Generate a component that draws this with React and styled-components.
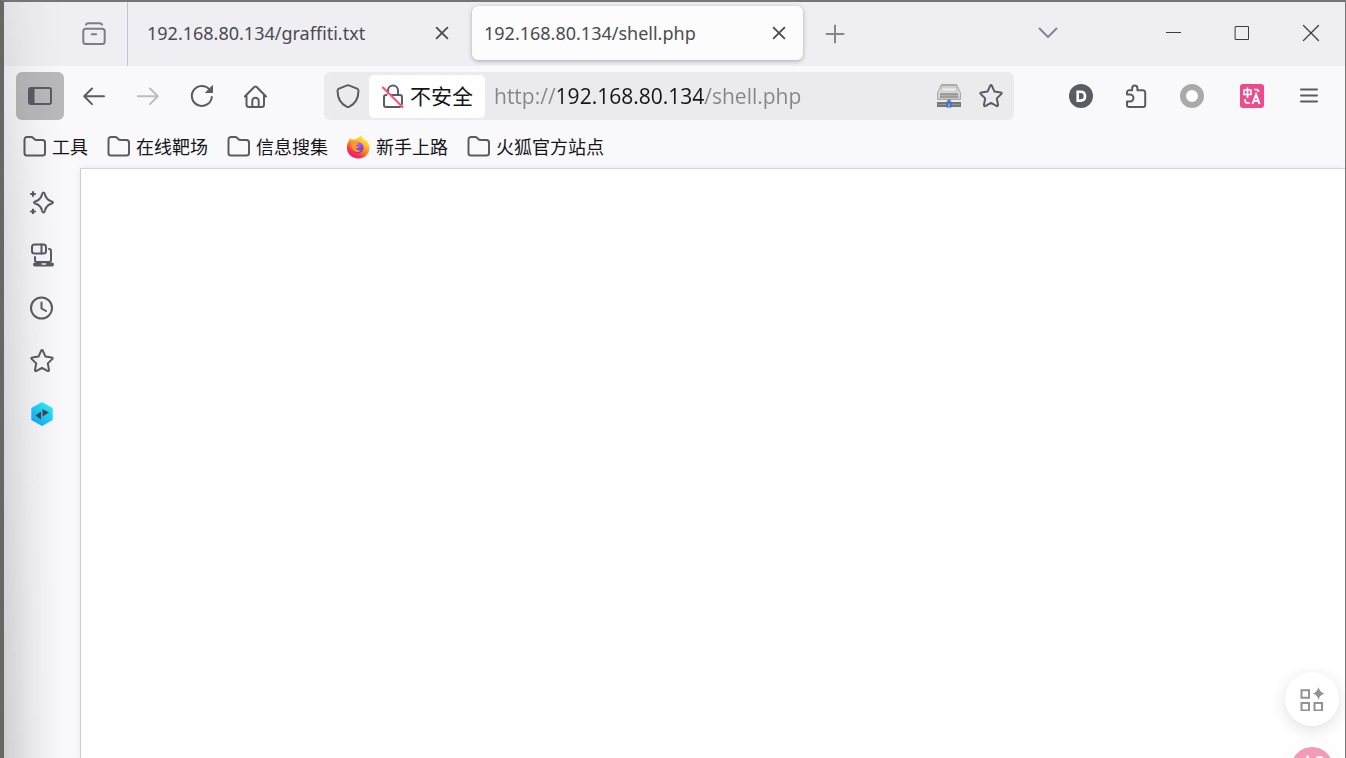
import React, { useState } from 'react';
import styled, { createGlobalStyle } from 'styled-components';


const GlobalStyle = createGlobalStyle`
  * { box-sizing: border-box; }

  body {
    margin: 0;
    font-family: 'Open Sans', 'Noto Sans CJK SC', sans-serif;
    color: #15141a;
  }

  button, input { font-family: inherit; }
`;


const BrowserWindow = styled.div`
  position: relative;
  display: flex;
  flex-direction: column;
  min-height: 100vh;
  overflow: hidden;
  border-style: solid;
  border-width: 2px 1px 0 4px;
  border-color: #757573 #777777 #757573 #686763;
  background: #f9f9fb;

  /* shade that falls on the left edge of the window */
  &::before {
    content: '';
    position: absolute;
    z-index: 2;
    top: 0;
    bottom: 0;
    left: 0;
    width: 60px;
    pointer-events: none;
    background: linear-gradient(to right, rgba(0,0,0,0.17), rgba(0,0,0,0.07) 45%, rgba(0,0,0,0.02) 80%, transparent);
    mask-image: linear-gradient(rgba(0,0,0,0.3), rgba(0,0,0,0.6) 25%, #000);
  }
`;

const TabStrip = styled.header`
  display: flex;
  align-items: center;
  height: 64px;
  padding-bottom: 2px;
  background: #efeef3;
`;

const IconButton = styled.button`
  display: flex;
  align-items: center;
  justify-content: center;
  flex: none;
  width: ${(props) => props.$width || 48}px;
  height: 48px;
  padding: 0;
  border: none;
  border-radius: 6px;
  background: ${(props) => (props.$active ? '#b9b9bb' : 'transparent')};
  color: ${(props) => props.$color || '#5b5b66'};
  cursor: pointer;
`;

const ViewArea = styled.div`
  display: flex;
  justify-content: flex-end;
  align-items: center;
  align-self: flex-start;
  flex: none;
  width: 124px;
  height: 64px;
  padding-right: 9px;
  border-right: 1px solid #c4c4ca;
`;

const TabList = styled.div`
  display: flex;
  gap: 6px;
  padding: 0 8px 0 7px;
`;

const Tab = styled.div`
  display: flex;
  align-items: center;
  width: 331px;
  height: 54px;
  padding: 0 12px;
  border-radius: 6px;
  background: ${(props) => (props.$active ? '#fcfcfc' : 'transparent')};
  box-shadow: ${(props) => (props.$active ? '0 1px 4px rgba(0,0,0,0.3)' : 'none')};
`;

const TabTitle = styled.button`
  flex: 1;
  padding: 0;
  border: none;
  background: none;
  color: #4b4b50;
  font-family: 'Noto Sans', sans-serif;
  font-size: 18px;
  line-height: 28px;
  text-align: left;
  white-space: nowrap;
  cursor: pointer;
`;

const WindowControls = styled.div`
  display: flex;
  margin-left: auto;
`;

const ListTabs = styled.div`
  padding-right: 66px;
`;

const Toolbar = styled.nav`
  display: flex;
  align-items: center;
  gap: 6px;
  height: 60px;
  padding: 0 12px;
`;

const UrlBar = styled.form`
  display: flex;
  align-items: center;
  flex: 1;
  min-width: 0;
  height: 48px;
  margin: 0 37px 0 38px;
  padding: 0 2px 0 3px;
  border-radius: 6px;
  background: #ebebed;
`;

const Identity = styled.button`
  display: flex;
  align-items: center;
  flex: none;
  gap: 5px;
  height: 43px;
  padding: 0 12px;
  border: none;
  border-radius: 5px;
  background: #ffffff;
  color: #5b5b66;
`;

const IdentityLabel = styled.span`
  padding-bottom: 2px;
  color: #15141a;
  font-family: 'Noto Sans CJK SC', sans-serif;
  font-size: 21px;
  line-height: 28px;
  white-space: nowrap;
`;

/* the host part of the address is darker than the rest */
const UrlInput = styled.input`
  flex: 1;
  min-width: 0;
  height: 40px;
  margin-left: 9px;
  padding: 0;
  border: none;
  outline: none;
  background: linear-gradient(to right, #86868a 64px, #15141a 64px, #15141a 211px, #86868a 211px);
  background-clip: text;
  -webkit-background-clip: text;
  color: transparent;
  caret-color: #15141a;
  font-size: 21px;
`;

const BookmarksBar = styled.nav`
  display: flex;
  align-items: center;
  gap: 19px;
  height: 42px;
  padding: 0 19px;
`;

const Bookmark = styled.a`
  display: flex;
  align-items: center;
  gap: 5px;
  text-decoration: none;
`;

const BookmarkLabel = styled.span`
  padding-bottom: 2px;
  color: #15141a;
  font-family: 'Noto Sans CJK SC', sans-serif;
  font-size: 18px;
  line-height: 26px;
  white-space: nowrap;
`;

const Body = styled.div`
  display: flex;
  flex: 1;
`;

const Sidebar = styled.aside`
  display: flex;
  flex-direction: column;
  align-items: center;
  flex: none;
  gap: 5px;
  width: 76px;
  padding-top: 10px;
`;

const Page = styled.main`
  flex: 1;
  border-top: 1px solid #d4d4d8;
  border-left: 1px solid #cfcfd2;
  background: #ffffff;
  box-shadow: 0 0 6px rgba(0,0,0,0.08);
`;

const FloatingTools = styled.div`
  position: absolute;
  right: 6px;
  bottom: -37px;
  display: flex;
  flex-direction: column;
  gap: 15px;
`;

const FloatingButton = styled.button`
  display: flex;
  align-items: center;
  justify-content: center;
  width: 54px;
  height: 54px;
  padding: 0;
  border: none;
  border-radius: 50%;
  background: #ffffff;
  color: #929292;
  box-shadow: ${(props) => (props.$flat ? '0 0 6px rgba(0,0,0,0.03)' : '0 4px 16px rgba(0,0,0,0.12)')};
`;


const Icon = ({ size = 24, children }) => (
  <svg width={size} height={size} viewBox="0 0 24 24" fill="none" stroke="currentColor" strokeWidth="2" strokeLinecap="round" strokeLinejoin="round" aria-hidden="true">
    {children}
  </svg>
)

const StarIcon = () => (
  <Icon>
    <path d="M11.1 1.8Q12 .3 12.9 1.8L15.5 7.6L21.7 8.4Q23.4 8.8 22.2 10.1L17.8 14.4L19 20.8Q19.1 22.7 17.4 21.9L12 18.9L6.6 21.9Q4.9 22.7 5 20.8L6.2 14.4L1.8 10.1Q.6 8.8 2.3 8.4L8.5 7.6Z" />
  </Icon>
)

const FolderIcon = () => (
  <Icon>
    <path stroke="#5b5b66" d="M1.5 4.5a2.5 2.5 0 0 1 2.5-2.5h4.3a2.5 2.5 0 0 1 1.7.7l1.5 1.5a2.5 2.5 0 0 0 1.7.7H19.5a2.5 2.5 0 0 1 2.5 2.5v10.6a2.5 2.5 0 0 1-2.5 2.5H4a2.5 2.5 0 0 1-2.5-2.5z" />
  </Icon>
)

const CloseIcon = () => (
  <Icon><path strokeWidth="1.8" d="M6.6 6.6l10.8 10.8M17.4 6.6L6.6 17.4" /></Icon>
)

const FirefoxIcon = () => (
  <svg width="24" height="24" viewBox="0.8 0 24 24" aria-hidden="true">
    <defs>
      <linearGradient id="fox" x1="0.8" y1="0.05" x2="0.25" y2="0.95">
        <stop offset="0" stopColor="#fff44f" />
        <stop offset="0.3" stopColor="#ffbd2e" />
        <stop offset="0.55" stopColor="#ff8020" />
        <stop offset="0.78" stopColor="#ff3647" />
        <stop offset="1" stopColor="#e31587" />
      </linearGradient>
      <radialGradient id="globe" cx="0.6" cy="0.2" r="0.9">
        <stop offset="0" stopColor="#a95cff" />
        <stop offset="0.55" stopColor="#7542e5" />
        <stop offset="1" stopColor="#4a2bb5" />
      </radialGradient>
    </defs>
    <path fill="url(#fox)" d="M15.6.3c.2 2.3 1.7 3.4 3.2 4.9.2-.2.3-.5.2-1 2.6 2 4.3 5.2 4.3 8.6 0 6-4.8 10.7-11 10.7S.7 18.8.7 12.8C.7 9.6 1.6 7 3.3 5.1c0-.8 0-1.4.2-2 .7.5 1.3 1.1 1.8 1.7 1-.3 2-.3 2.900-.1 1.300-1.100 2.800-1.500 3.300-1.500.9-1 2.300-2.200 4.100-2.900z" />
    <circle cx="12" cy="12.500" r="5.300" fill="url(#globe)" />
    <path fill="#ff9a2b" d="M5 7.500c1.800-1 3.600-.7 4.800.3 1 .2 2.400 0 2.500.6 0 1-2.100 1.300-2.500 2.400.9 1.100 2.400.6 3.500.8-1 1.500-2.700 1.500-3.800 1.400 1 2.100 3.600 3 6.100 1.700-1.500 2.500-5.700 3-8 .7C5.300 13.300 4.700 10 5 7.500z" />
  </svg>
)

const ServerIcon = () => (
  <svg width="24" height="24" viewBox="0 0 24 24" aria-hidden="true">
    <defs>
      <linearGradient id="drive" x1="0" y1="0" x2="0" y2="1">
        <stop offset="0" stopColor="#a9a9a9" />
        <stop offset="0.45" stopColor="#dddddd" />
        <stop offset="1" stopColor="#c4c4c4" />
      </linearGradient>
    </defs>
    <path d="M4.5.5h15L23.5 9v6.500H.5V9z" fill="url(#drive)" stroke="#a8a8a8" />
    <path d="M5 2h14l2.500 6h-19z" fill="#cfcfcf" />
    <path d="M5.500 5.500h13" stroke="#f0f0f0" strokeWidth="2" />
    <path d="M3 9h18v5H3z" fill="#9c9c9c" />
    <path d="M3 11.500h18" stroke="#b0b0b0" />
    <path d="M10.500 15.500h3V18h-3z" fill="#777777" />
    <path d="M0 18h24v5H0z" fill="#777777" />
    <path d="M1 20.500h22" stroke="#959595" />
    <path d="M9.500 17.500h5v6h-5z" fill="#3f72c8" />
    <path d="M11 19.500h2v3h-2z" fill="#6ba5ff" />
  </svg>
)

const TranslateIcon = () => (
  <svg width="24" height="24" viewBox="0 0 24 24" aria-hidden="true">
    <rect width="24" height="24" rx="3" fill="#ec4c8c" />
    <g fill="none" stroke="#ffffff" strokeWidth="1.700">
      <path d="M4 6h7v4.500H4zM7.500 3.500V14" />
      <path d="M14 5.500h2.500q2 0 2 2.500M5 15v1.500q0 2.500 3 2.500h2" />
      <path strokeWidth="2" d="M12.500 20l3.500-9.500 3.500 9.500M13.500 17h5" />
    </g>
  </svg>
)


const bookmarks = [
  { name: '工具' },
  { name: '在线靶场' },
  { name: '信息搜集' },
  { name: '新手上路', firefox: true },
  { name: '火狐官方站点' },
];

const tabs = ['192.168.80.134/graffiti.txt', '192.168.80.134/shell.php'];


const Tabs = () => {
  const [current, setCurrent] = useState(1);

  return (
    <TabStrip>
      <ViewArea>
        <IconButton aria-label="View" $color="#7d7d85">
          <Icon>
            <rect x="1.300" y="6.700" width="21.400" height="15.300" rx="2.500" />
            <path d="M4 2.500q.7-1.300 2.200-1.300h11.600q1.500 0 2.200 1.300M9.800 12.200h4.400" />
          </Icon>
        </IconButton>
      </ViewArea>

      <TabList>
        {tabs.map((title, i) => (
          <Tab key={title} $active={i === current}>
            <TabTitle onClick={() => setCurrent(i)}>{title}</TabTitle>
            <IconButton $width={24} $color="#4b4b50" aria-label="Close tab"><CloseIcon /></IconButton>
          </Tab>
        ))}
      </TabList>

      <IconButton aria-label="New tab" $color="#85858c">
        <Icon><path d="M12 4.500v17M3.500 13h17" /></Icon>
      </IconButton>

      <WindowControls>
        <ListTabs>
          <IconButton aria-label="List tabs" $color="#85858c">
            <Icon><path d="M3.500 7.500l8.500 8.500 8.500-8.500" /></Icon>
          </IconButton>
        </ListTabs>
        <IconButton $width={69} $color="#3c3c42" aria-label="Minimize">
          <Icon><path strokeWidth="1" strokeLinecap="butt" d="M5 11.500h15" /></Icon>
        </IconButton>
        <IconButton $width={69} $color="#3c3c42" aria-label="Maximize">
          <Icon><path strokeWidth="1" strokeLinejoin="miter" d="M5.500 5.500h13v13h-13z" /></Icon>
        </IconButton>
        <IconButton $width={69} $color="#3c3c42" aria-label="Close">
          <Icon><path strokeWidth="1.300" d="M4.500 4.500l15 15M19.500 4.500l-15 15" /></Icon>
        </IconButton>
      </WindowControls>
    </TabStrip>
  )
}


const NavBar = () => {
  const [url, setUrl] = useState('http://192.168.80.134/shell.php');

  return (
    <Toolbar>
      <IconButton $active aria-label="Sidebar">
        <Icon>
          <rect x="1" y="4" width="22" height="16" rx="2" />
          <path fill="currentColor" stroke="none" d="M1 4h5.500v16H1z" />
        </Icon>
      </IconButton>
      <IconButton aria-label="Back">
        <Icon><path d="M22 12.300H2.500M10 4.500l-7.800 7.800 7.800 7.800" /></Icon>
      </IconButton>
      <IconButton aria-label="Forward" $color="#bcbcc2">
        <Icon><path d="M2 12.300h19.500M14 4.500l7.800 7.800-7.800 7.800" /></Icon>
      </IconButton>
      <IconButton aria-label="Reload">
        <Icon>
          <path d="M19.500 5.500a10 10 0 1 0 2.300 7.500" />
          <path fill="currentColor" strokeWidth="1" d="M22.500 2v6.500H16z" />
        </Icon>
      </IconButton>
      <IconButton aria-label="Home">
        <Icon>
          <path d="M.8 12.500L10.300 3q1.200-1 2.400 0l9.300 9.500M2.500 11v9.500A2.500 2.500 0 0 0 5 23h12.500a2.500 2.500 0 0 0 2.500-2.500V11" />
          <path d="M8.300 22.500V17a3.200 3.200 0 0 1 6.400 0v5.500" />
        </Icon>
      </IconButton>

      <UrlBar onSubmit={(e) => e.preventDefault()}>
        <IconButton type="button" $width={42} aria-label="Protections">
          <Icon><path d="M12 1.200q.8 0 1.500.4l7.500 3q1.500.6 1.500 2.300C22.300 14 19.500 20 13 22.900q-1 .4-2 0C4.500 20 1.700 14 1.500 6.900q0-1.700 1.500-2.300l7.500-3q.7-.4 1.500-.4z" /></Icon>
        </IconButton>
        <Identity type="button">
          <Icon>
            <path d="M7 9V6.500a5 5 0 0 1 10 0V10M5.500 11H5a2 2 0 0 0-2 2v8a2 2 0 0 0 2 2h14M10 11h9a2 2 0 0 1 2 2v7" />
            <path stroke="#ff4f6d" d="M2 3.500L21.500 23" />
          </Icon>
          <IdentityLabel>不安全</IdentityLabel>
        </Identity>
        <UrlInput aria-label="Address" spellCheck={false} value={url} onChange={(e) => setUrl(e.target.value)} />
        <IconButton type="button" $width={42} aria-label="Site extension"><ServerIcon /></IconButton>
        <IconButton type="button" $width={42} aria-label="Bookmark this page"><StarIcon /></IconButton>
      </UrlBar>

      <IconButton aria-label="Account">
        <Icon>
          <circle cx="12" cy="12" r="12" fill="currentColor" stroke="none" />
          <path stroke="#ffffff" strokeWidth="2.600" strokeLinejoin="miter" d="M8.700 7.800h3q4.300 0 4.300 4.400t-4.300 4.400h-3z" />
        </Icon>
      </IconButton>
      <IconButton aria-label="Extensions">
        <Icon>
          <path d="M4 10.500V8.300A2 2 0 0 1 6 6.300h3.200V4.200a2.600 2.600 0 0 1 5.200 0v2.100H20a2.200 2.200 0 0 1 2.200 2.200V21a2 2 0 0 1-2 2H6a2 2 0 0 1-2-2v-3.500h3a3 3 0 0 0 0-7z" />
        </Icon>
      </IconButton>
      <IconButton $width={54} aria-label="Proxy">
        <Icon><circle cx="12" cy="12" r="9" fill="#ffffff" stroke="#a9a9a9" strokeWidth="6" /></Icon>
      </IconButton>
      <IconButton $width={54} aria-label="Translate"><TranslateIcon /></IconButton>
      <IconButton aria-label="Menu">
        <Icon><path d="M4 5.500h16M4 11.500h16M4 17.500h16" /></Icon>
      </IconButton>
    </Toolbar>
  )
}


const SideTools = () => (
  <Sidebar>
    <IconButton aria-label="Assistant">
      <Icon>
        <path d="M13.500 2.500Q14.500 2.500 15 4.500Q16 9 20.500 11Q23 11.700 23 12.500T20.500 14Q16 16 15 20.500Q14.500 22.500 13.500 22.500T12 20.500Q11 16 6.500 14Q4 13.300 4 12.500T6.500 11Q11 9 12 4.500Q12.500 2.500 13.500 2.500z" />
        <path d="M3 2v4M1 4h4M3 19.500v4M1 21.500h4" />
      </Icon>
    </IconButton>
    <IconButton aria-label="Synced tabs">
      <Icon>
        <rect x="2" y="1.500" width="14" height="9" rx="2.500" />
        <path d="M11.500 1.500v9M5 14v3a2 2 0 0 0 2 2h12a2 2 0 0 0 2-2V8q0-2-2-2" />
        <path strokeWidth="4" d="M5 21.500h17" />
        <path stroke="#f3f3f5" strokeWidth="1.500" d="M12 21h3.500" />
      </Icon>
    </IconButton>
    <IconButton aria-label="History">
      <Icon><circle cx="11.500" cy="12" r="10.500" /><path d="M11.500 6.500v6l4.500 2.500" /></Icon>
    </IconButton>
    <IconButton aria-label="Bookmarks"><StarIcon /></IconButton>
    <IconButton aria-label="Hex extension">
      <Icon>
        <defs>
          <linearGradient id="hex" x1="0.2" y1="1" x2="0.8" y2="0">
            <stop offset="0" stopColor="#12aaff" />
            <stop offset="1" stopColor="#2cf3f5" />
          </linearGradient>
        </defs>
        <path fill="url(#hex)" stroke="none" d="M12 0l10.700 6v12L12 24 1.300 18V6z" />
        <path fill="#4a4550" stroke="none" d="M5.500 13.500l5.500-4v8zM12.500 7l6.500 3.500-6.500 4z" />
      </Icon>
    </IconButton>
  </Sidebar>
)


function App() {
  return (
    <BrowserWindow>
      <GlobalStyle />
      <Tabs />
      <NavBar />

      <BookmarksBar>
        {bookmarks.map((item) => (
          <Bookmark key={item.name} href="#">
            {item.firefox ? <FirefoxIcon /> : <FolderIcon />}
            <BookmarkLabel>{item.name}</BookmarkLabel>
          </Bookmark>
        ))}
      </BookmarksBar>

      <Body>
        <SideTools />
        <Page />
      </Body>

      <FloatingTools>
        <FloatingButton aria-label="Tools">
          <Icon>
            <g strokeLinejoin="miter">
              <path d="M1.500 3.200h7.500v7.500H1.500zM1.500 16h7.500v7.500H1.500zM14.500 16H22v7.500h-7.500z" />
            </g>
            <path fill="currentColor" stroke="none" d="M18.500 0q1 5.300 6 6.500-5 1.200-6 6.500-1-5.300-6-6.500 5-1.200 6-6.500z" />
          </Icon>
        </FloatingButton>
        <FloatingButton $flat aria-label="Translate page">
          <Icon size={42}>
            <circle cx="12" cy="12" r="12" fill="#f49ab4" stroke="none" />
            <path stroke="#ffffff" strokeWidth="1.500" strokeLinecap="butt" d="M9.500 5v7M6 7.500h7v3H6zM14.500 6h3v4" />
          </Icon>
        </FloatingButton>
      </FloatingTools>
    </BrowserWindow>
  )
}

export default App
